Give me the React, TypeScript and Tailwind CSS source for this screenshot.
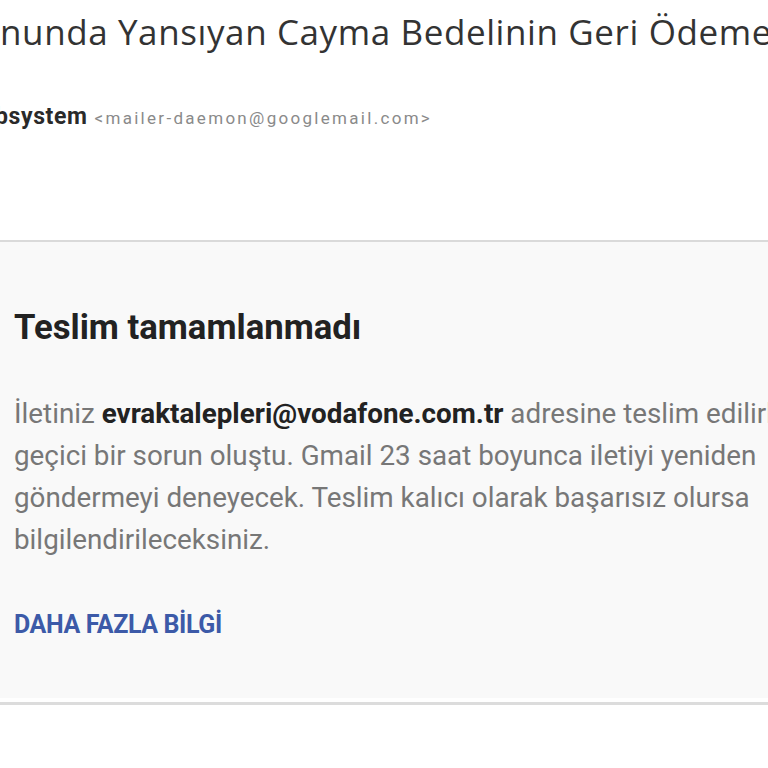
export default function App() {
  return (
    <div className="w-[768px] h-[768px] bg-white overflow-hidden relative" style={{ fontFamily: "Roboto, 'Liberation Sans', sans-serif" }}>
      <div className="h-[240px] flex flex-col">
        <div className="pt-[10px] whitespace-nowrap text-[35px] leading-[44px] text-[#333] font-['Open_Sans',sans-serif] tracking-[0.6px]">
          nunda Yansıyan Cayma Bedelinin Geri Ödemesi
        </div>
        <div className="mt-[49px] whitespace-nowrap flex items-baseline ml-[-5px]">
          <span className="text-[23px] leading-[28px] font-bold text-[#2a2a2a] tracking-[0.6px]">bsystem</span>
          <span className="ml-[7px] text-[17px] text-[#8a8a8a] tracking-[2.3px]">&lt;mailer-daemon@googlemail.com&gt;</span>
        </div>
      </div>
      <div className="border-t-2 border-[#dadada] bg-[#f9f9f9] h-[458px] pl-[14px] pr-0">
        <div className="pt-[65px] text-[34.7px] leading-[40px] font-bold text-[#222] whitespace-nowrap">Teslim tamamlanmadı</div>
        <div className="mt-[46px] text-[27.8px] leading-[42px] text-[#777] whitespace-nowrap">
          İletiniz <span className="font-bold text-[#222]">evraktalepleri@vodafone.com.tr</span> adresine teslim edilirken<br />
          geçici bir sorun oluştu. Gmail 23 saat boyunca iletiyi yeniden<br />
          göndermeyi deneyecek. Teslim kalıcı olarak başarısız olursa<br />
          bilgilendirileceksiniz.
        </div>
        <div className="mt-[49px] text-[25px] font-bold text-[#3c5aa8] leading-[30px] tracking-[-0.4px]">DAHA FAZLA BİLGİ</div>
      </div>
      <div className="h-[4px] bg-white" />
      <div className="h-[3px] bg-[#dcdcdc]" />
    </div>
  );
}
